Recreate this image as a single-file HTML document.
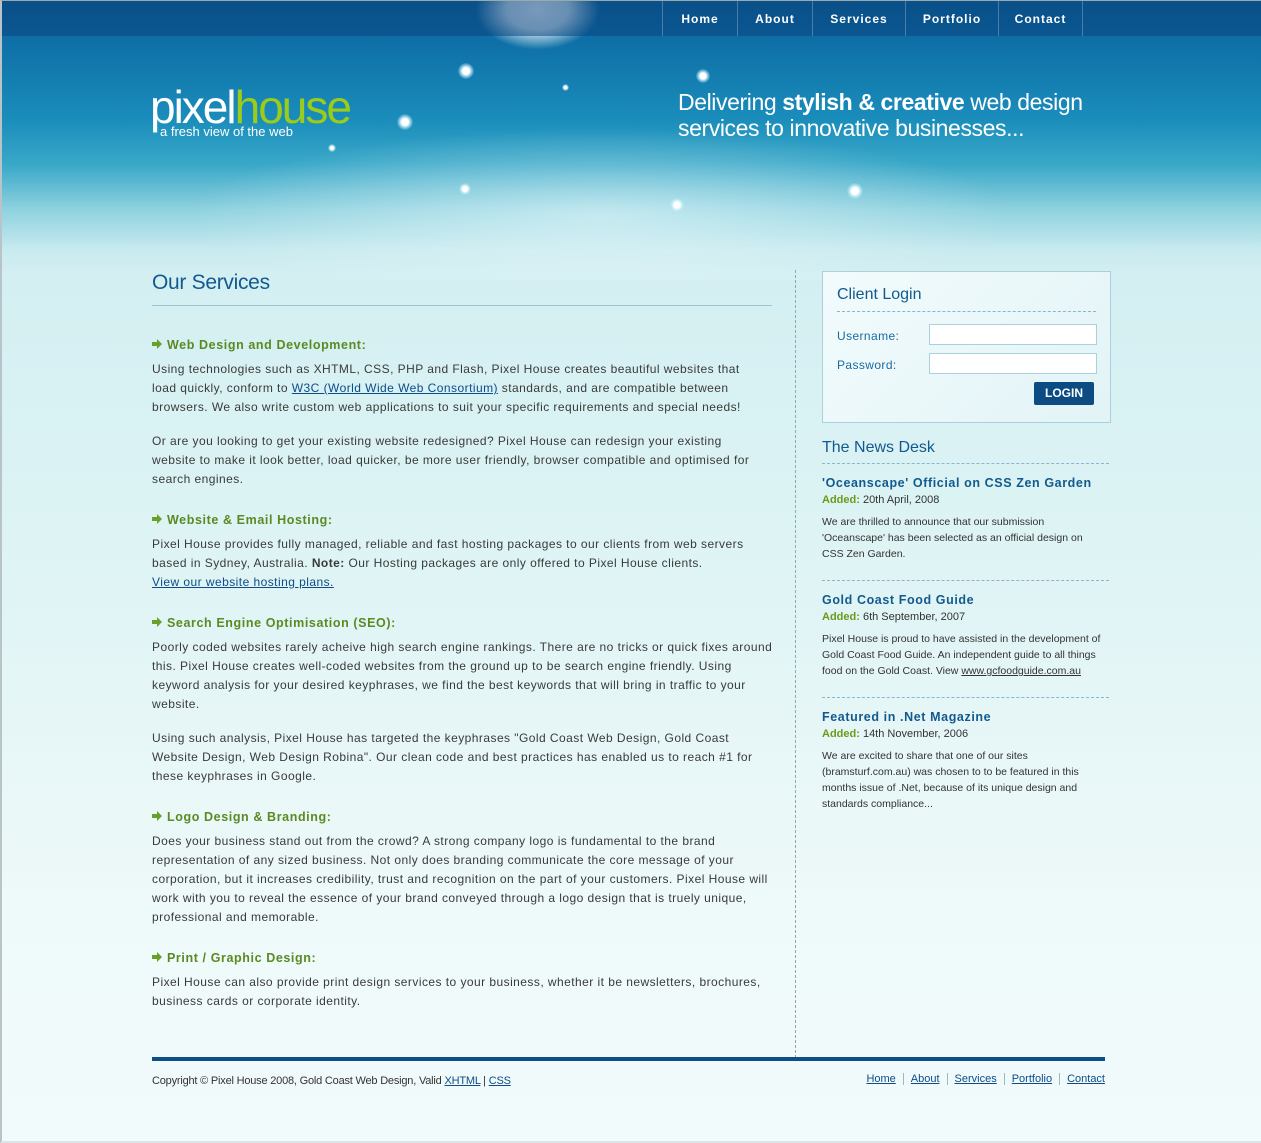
<!DOCTYPE html>
<html><head><meta charset="utf-8"><style>
*{margin:0;padding:0;box-sizing:border-box}
body{width:1261px;height:1143px;overflow:hidden;font-family:"Liberation Sans",sans-serif;background:linear-gradient(#0d5d94 0px,#0e6fa6 40px,#1a8dbb 120px,#3aa8c8 165px,#8fd2df 210px,#c8eaef 250px,#d4eff2 275px,#dcf3f4 500px,#eef9f9 900px,#f2fbfb 1143px);position:relative;color:#333}
.glow{position:absolute;left:150px;top:120px;width:900px;height:160px;background:radial-gradient(ellipse at 50% 60%,rgba(235,250,252,.55),rgba(235,250,252,0) 65%)}
.frame{position:absolute;left:0;top:0;width:1261px;height:1143px;border-left:2px solid #b8c4c8;border-top:1px solid #9aa;border-bottom:2px solid #dde3e6;pointer-events:none}
.nav{position:absolute;left:0;top:1px;width:1261px;height:35px;background:rgba(10,70,130,.55)}
.nav a{position:absolute;top:0;height:35px;line-height:37px;color:#fff;font-weight:bold;font-size:12px;letter-spacing:1px;text-decoration:none;text-align:center;border-left:1px solid rgba(255,255,255,.25)}
.cloud{position:absolute;left:475px;top:0;width:125px;height:50px;background:radial-gradient(ellipse at 50% 20%,rgba(255,255,255,1),rgba(255,255,255,.85) 35%,rgba(255,255,255,0) 70%)}
.dot{position:absolute;border-radius:50%;background:radial-gradient(#fff 30%,rgba(200,240,255,.5) 55%,rgba(255,255,255,0) 75%)}
.logo{position:absolute;left:150px;top:84px;font-size:46px;letter-spacing:-2px;color:#fff;line-height:46px}
.logo span{color:#9ccc1a}
.tag{position:absolute;left:160px;top:124px;font-size:13px;color:#fff}
.slogan{position:absolute;left:678px;top:89px;font-size:23px;line-height:26px;color:#fff;letter-spacing:-.4px}
h1{position:absolute;left:152px;top:271px;font-size:21px;font-weight:normal;color:#125a8e;letter-spacing:-.3px}
.hr{position:absolute;left:152px;top:305px;width:620px;height:1px;background:#9cc6d4}
.main{position:absolute;left:152px;top:336px;width:700px;font-size:12px;line-height:19px;letter-spacing:.45px;color:#3a3a3a;white-space:nowrap}
.main h3{font-size:12.5px;color:#5a8a22;font-weight:bold;letter-spacing:.6px;margin-bottom:5px;padding-left:15px;position:relative}
.main h3:before{content:"";position:absolute;left:0;top:6px;width:5px;height:4px;background:#6aa02a}
.main h3:after{content:"";position:absolute;left:5px;top:3px;border-left:5px solid #6aa02a;border-top:5px solid transparent;border-bottom:5px solid transparent}
.main p{margin-bottom:15px}
.main p.g{margin-bottom:22px}
a{color:#0b4c8a}
.vline{position:absolute;left:795px;top:270px;height:788px;border-left:1px dashed #8aaab8}
.login{position:absolute;left:822px;top:271px;width:289px;height:152px;border:1px solid #a9d0dc;background:linear-gradient(135deg,#f2fbfc,#e2f4f7)}
.login h2{position:absolute;left:14px;top:14px;font-size:16px;font-weight:normal;color:#125a8e}
.dl{position:absolute;border-top:1px dashed #8bb5cc}
.login label{position:absolute;left:14px;font-size:12px;color:#1a6aa0;letter-spacing:.4px}
.login .in{position:absolute;left:106px;width:168px;height:21px;background:#fff;border:1px solid #a9d0dc}
.btn{position:absolute;left:211px;top:110px;width:60px;height:23px;background:#0c4c83;color:#fff;font-weight:bold;font-size:12px;text-align:center;line-height:23px;border-radius:2px}
.side{position:absolute;left:822px;width:320px;font-size:10.5px;line-height:16px;color:#333;white-space:nowrap}
.side h4{font-size:12.5px;color:#125a8e;letter-spacing:.6px;margin-bottom:1px}
.side .ad{font-size:11px;margin-bottom:6px}
.side .ad b{color:#6a9a1a}
.news{position:absolute;left:822px;top:439px;font-size:16px;color:#125a8e}
.foot{position:absolute;left:152px;top:1057px;width:953px;height:4px;background:#0b4f86}
.copy{position:absolute;left:152px;top:1075px;font-size:11px;color:#333;letter-spacing:-.2px}
.fl{position:absolute;right:156px;top:1073px;font-size:11px}
.fl a{padding:0 7px;border-left:1px solid #9bb}
.fl a:first-child{border:0}
.fl a:last-child{padding-right:0}
</style></head><body>
<div class="glow"></div>
<div class="cloud"></div>
<div class="dot" style="left:458px;top:63px;width:16px;height:16px"></div>
<div class="dot" style="left:696px;top:69px;width:14px;height:14px"></div>
<div class="dot" style="left:397px;top:114px;width:16px;height:16px"></div>
<div class="dot" style="left:847px;top:183px;width:16px;height:16px"></div>
<div class="dot" style="left:670px;top:198px;width:14px;height:14px"></div>
<div class="dot" style="left:459px;top:183px;width:12px;height:12px"></div>
<div class="dot" style="left:328px;top:144px;width:8px;height:8px"></div>
<div class="dot" style="left:562px;top:84px;width:7px;height:7px"></div>
<div class="nav">
<a style="left:662px;width:75px">Home</a>
<a style="left:737px;width:75px">About</a>
<a style="left:812px;width:93px">Services</a>
<a style="left:905px;width:93px">Portfolio</a>
<a style="left:998px;width:85px;border-right:1px solid rgba(255,255,255,.25)">Contact</a>
</div>
<div class="logo">pixel<span>house</span></div>
<div class="tag">a fresh view of the web</div>
<div class="slogan">Delivering <b>stylish &amp; creative</b> web design<br>services to innovative businesses...</div>
<h1>Our Services</h1><div class="hr"></div>
<div class="main">
<h3>Web Design and Development:</h3>
<p>Using technologies such as XHTML, CSS, PHP and Flash, Pixel House creates beautiful websites that<br>load quickly, conform to <a href="#">W3C (World Wide Web Consortium)</a> standards, and are compatible between<br>browsers. We also write custom web applications to suit your specific requirements and special needs!</p>
<p class="g">Or are you looking to get your existing website redesigned? Pixel House can redesign your existing<br>website to make it look better, load quicker, be more user friendly, browser compatible and optimised for<br>search engines.</p>
<h3>Website &amp; Email Hosting:</h3>
<p class="g">Pixel House provides fully managed, reliable and fast hosting packages to our clients from web servers<br>based in Sydney, Australia. <b>Note:</b> Our Hosting packages are only offered to Pixel House clients.<br><a href="#">View our website hosting plans.</a></p>
<h3>Search Engine Optimisation (SEO):</h3>
<p>Poorly coded websites rarely acheive high search engine rankings. There are no tricks or quick fixes around<br>this. Pixel House creates well-coded websites from the ground up to be search engine friendly. Using<br>keyword analysis for your desired keyphrases, we find the best keywords that will bring in traffic to your<br>website.</p>
<p class="g">Using such analysis, Pixel House has targeted the keyphrases "Gold Coast Web Design, Gold Coast<br>Website Design, Web Design Robina". Our clean code and best practices has enabled us to reach #1 for<br>these keyphrases in Google.</p>
<h3>Logo Design &amp; Branding:</h3>
<p class="g">Does your business stand out from the crowd? A strong company logo is fundamental to the brand<br>representation of any sized business. Not only does branding communicate the core message of your<br>corporation, but it increases credibility, trust and recognition on the part of your customers. Pixel House will<br>work with you to reveal the essence of your brand conveyed through a logo design that is truely unique,<br>professional and memorable.</p>
<h3>Print / Graphic Design:</h3>
<p>Pixel House can also provide print design services to your business, whether it be newsletters, brochures,<br>business cards or corporate identity.</p>
</div>
<div class="vline"></div>
<div class="login"><h2>Client Login</h2><div class="dl" style="left:14px;top:39px;width:259px"></div>
<label style="top:57px">Username:</label><div class="in" style="top:52px"></div>
<label style="top:86px">Password:</label><div class="in" style="top:81px"></div>
<div class="btn">LOGIN</div></div>
<div class="news">The News Desk</div><div class="dl" style="left:822px;top:463px;width:287px"></div>
<div class="side" style="top:475px"><h4>'Oceanscape' Official on CSS Zen Garden</h4><div class="ad"><b>Added:</b> 20th April, 2008</div>We are thrilled to announce that our submission<br>'Oceanscape' has been selected as an official design on<br>CSS Zen Garden.</div>
<div class="dl" style="left:822px;top:580px;width:287px"></div>
<div class="side" style="top:592px"><h4>Gold Coast Food Guide</h4><div class="ad"><b>Added:</b> 6th September, 2007</div>Pixel House is proud to have assisted in the development of<br>Gold Coast Food Guide. An independent guide to all things<br>food on the Gold Coast. View <a href="#" style="color:#333">www.gcfoodguide.com.au</a></div>
<div class="dl" style="left:822px;top:697px;width:287px"></div>
<div class="side" style="top:709px"><h4>Featured in .Net Magazine</h4><div class="ad"><b>Added:</b> 14th November, 2006</div>We are excited to share that one of our sites<br>(bramsturf.com.au) was chosen to to be featured in this<br>months issue of .Net, because of its unique design and<br>standards compliance...</div>
<div class="foot"></div>
<div class="copy">Copyright © Pixel House 2008, Gold Coast Web Design, Valid <a href="#">XHTML</a> | <a href="#">CSS</a></div>
<div class="fl"><a href="#">Home</a><a href="#">About</a><a href="#">Services</a><a href="#">Portfolio</a><a href="#">Contact</a></div>
<div class="frame"></div>
</body></html>
